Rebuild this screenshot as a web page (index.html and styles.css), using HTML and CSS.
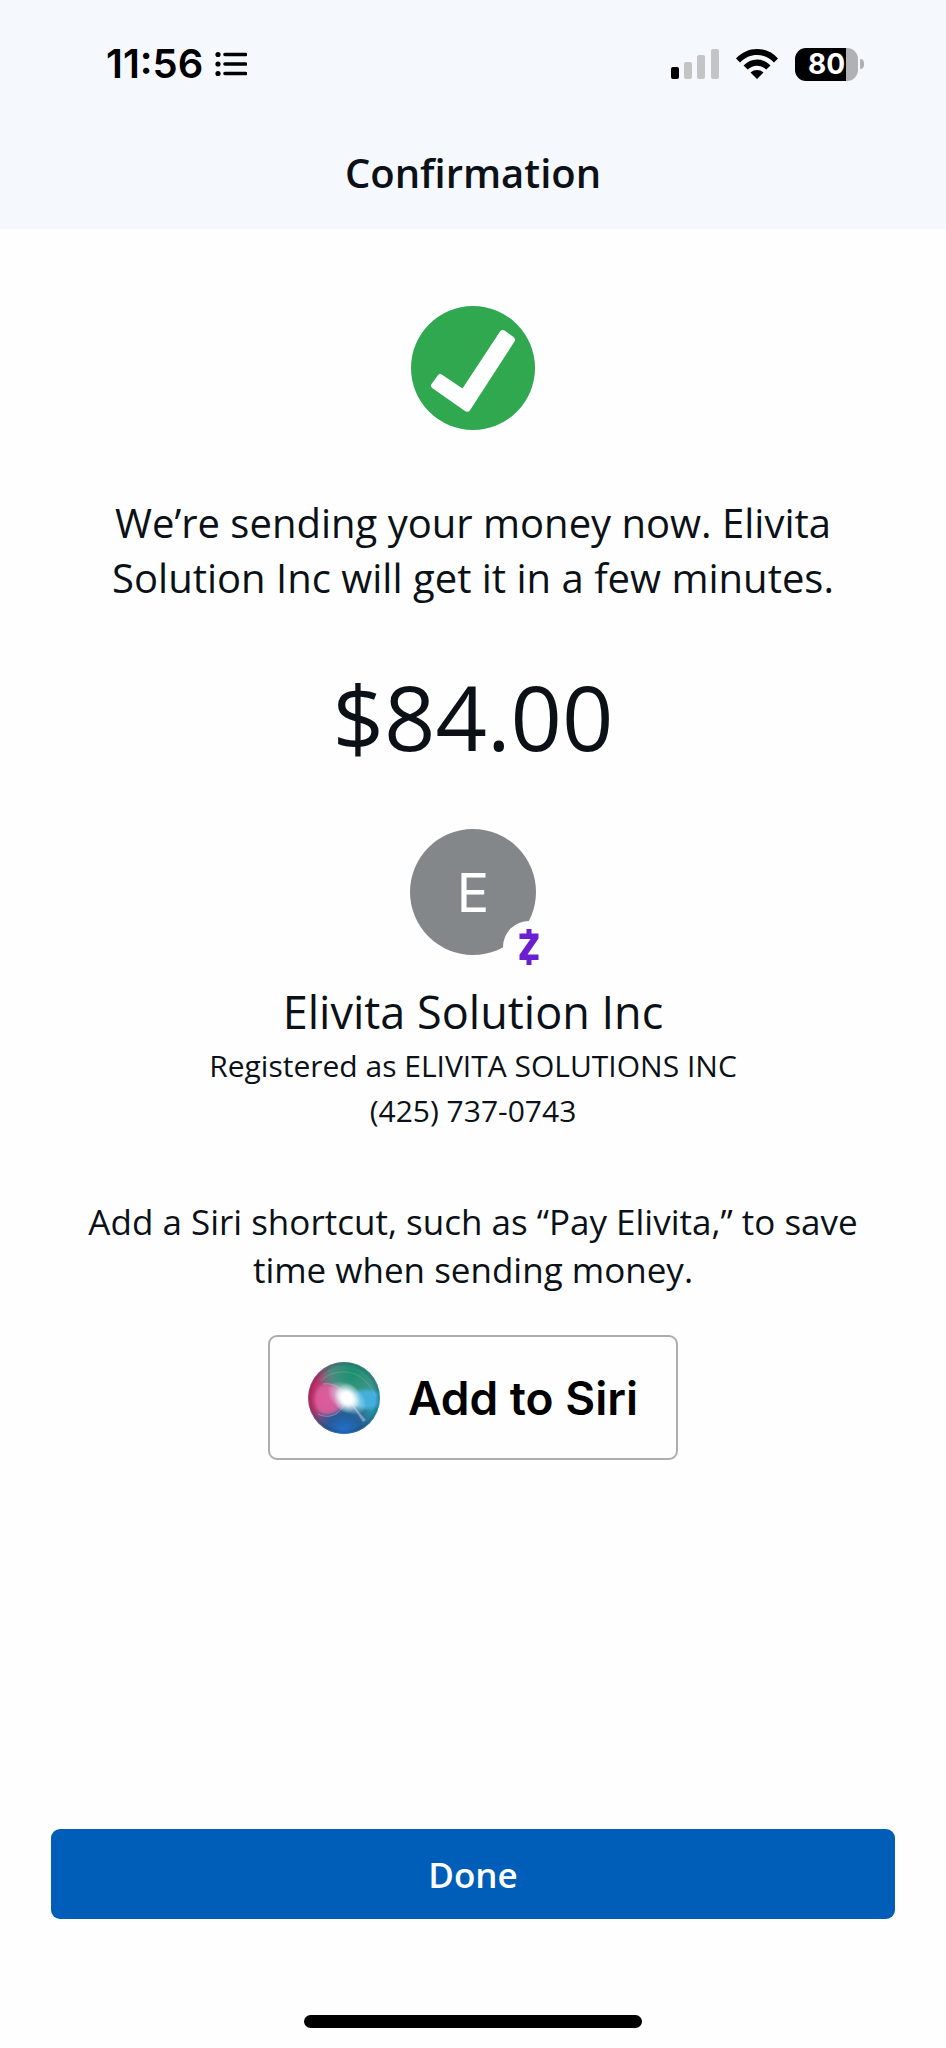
FILE: index.html
```html
<!DOCTYPE html>
<html lang="en">
<head>
<meta charset="utf-8">
<meta name="viewport" content="width=device-width, initial-scale=1">
<title>Confirmation</title>
<link rel="stylesheet" href="styles.css">
</head>
<body>
<div class="screen">
  <header class="top">
    <div class="status">
      <div class="status-left">
        <span class="clock">11:56</span>
        <svg class="list-icon" width="32" height="26" viewBox="0 0 32 26" aria-hidden="true">
          <g fill="#000"><circle cx="3" cy="3.500" r="2.600"/><circle cx="3" cy="13" r="2.600"/><circle cx="3" cy="22.500" r="2.600"/></g>
          <path d="M10 3.500H30.500M10 13H30.500M10 22.500H30.500" stroke="#000" stroke-width="3.600" stroke-linecap="round"/>
        </svg>
      </div>
      <div class="status-right">
        <svg width="48" height="30" viewBox="0 0 48 30" aria-hidden="true">
          <rect x="0" y="18" width="8" height="12" rx="2" fill="#000"/>
          <rect x="13" y="13" width="8" height="17" rx="2" fill="#c3c4c6"/>
          <rect x="26" y="6" width="8" height="24" rx="2" fill="#c3c4c6"/>
          <rect x="40" y="0" width="8" height="30" rx="2" fill="#c3c4c6"/>
        </svg>
        <svg width="44" height="32" viewBox="0 0 44 32" aria-hidden="true">
          <path d="M1 10.500C12.500-2.300 31.500-2.300 43 10.500L39 14.400C29.500 4.500 14.500 4.500 5 14.400Z"/>
          <path d="M8.500 17.500C16 9.500 28 9.500 35.500 17.500L31.300 21.600C26 16.500 18 16.500 12.700 21.600Z"/>
          <path d="M15.500 24.500C19.300 21.200 24.700 21.200 28.500 24.500L22 31Z"/>
        </svg>
        <div class="battery"><span class="battery-body">80</span><span class="battery-nub"></span></div>
      </div>
    </div>
    <h1 class="title">Confirmation</h1>
  </header>
  <main class="content">
    <svg class="check" width="124" height="124" viewBox="0 0 124 124" role="img" aria-label="Success">
      <circle cx="62" cy="62" r="62" fill="#2fa84f"/>
      <path d="M31.500 69Q28.500 67 26.800 69.500L20.500 78Q19 80.500 21.500 82.300L54 105Q57 107 59 104.200L103.500 35.500Q105 32.800 102.500 31L94 24.800Q91 23 89 25.500L51.500 82.500Z" fill="#fff"/>
    </svg>
    <p class="message">We’re sending your money now. Elivita Solution Inc will get it in a few minutes.</p>
    <p class="amount">$84.00</p>
    <div class="avatar">
      <span>E</span>
      <span class="badge">
        <svg width="20" height="36" viewBox="0 0 20 36" role="img" aria-label="Zelle">
          <path d="M7.500 0H12.500V4.500H19.500V9.500L8.500 25.500H19.500V31H12.500V36H7.500V31H.5V25.800L11.500 10H.5V4.500H7.500Z" fill="#6a1fd0"/>
        </svg>
      </span>
    </div>
    <h2 class="name">Elivita Solution Inc</h2>
    <p class="detail">Registered as ELIVITA SOLUTIONS INC</p>
    <p class="detail">(425) 737-0743</p>
    <p class="hint">Add a Siri shortcut, such as “Pay Elivita,” to save time when sending money.</p>
    <button class="siri" type="button">
      <svg width="72" height="72" viewBox="0 0 72 72" aria-hidden="true">
        <defs>
          <clipPath id="orb"><circle cx="36" cy="36" r="36"/></clipPath>
          <filter id="soft" x="-20%" y="-20%" width="140%" height="140%"><feGaussianBlur stdDeviation="1.500"/></filter>
          <linearGradient id="base" x1="0" y1=".4" x2="1" y2=".6"><stop offset="0" stop-color="#d3265f"/><stop offset=".25" stop-color="#a04676"/><stop offset=".55" stop-color="#4b7f90"/><stop offset="1" stop-color="#1f9aa8"/></linearGradient>
          <radialGradient id="green" cx=".62" cy=".15" r=".5"><stop offset="0" stop-color="#17906c"/><stop offset=".6" stop-color="#3c9880" stop-opacity=".8"/><stop offset="1" stop-color="#4b9b8b" stop-opacity="0"/></radialGradient>
          <radialGradient id="blue" cx=".5" cy=".98" r=".5"><stop offset="0" stop-color="#2273d4"/><stop offset=".5" stop-color="#205a9a" stop-opacity=".9"/><stop offset="1" stop-color="#265790" stop-opacity="0"/></radialGradient>
          <radialGradient id="pink" cx=".4" cy=".5" r=".6"><stop offset="0" stop-color="#ea5c9e"/><stop offset="1" stop-color="#d4609f"/></radialGradient>
          <radialGradient id="glow"><stop offset="0" stop-color="#fff"/><stop offset=".35" stop-color="#fff" stop-opacity=".9"/><stop offset=".65" stop-color="#e4f4fb" stop-opacity=".4"/><stop offset="1" stop-color="#dff" stop-opacity="0"/></radialGradient>
          <radialGradient id="rim"><stop offset=".86" stop-color="#163252" stop-opacity="0"/><stop offset=".96" stop-color="#163252" stop-opacity=".25"/><stop offset="1" stop-color="#69a4bd" stop-opacity=".4"/></radialGradient>
        </defs>
        <g clip-path="url(#orb)">
          <rect width="72" height="72" fill="url(#base)"/>
          <rect width="72" height="72" fill="url(#green)"/>
          <rect width="72" height="72" fill="url(#blue)"/>
          <g filter="url(#soft)">
            <path d="M12 24C24 19 35 26 39 37C34 50 20 56 11 50C5 43 5 30 12 24Z" fill="url(#pink)" opacity=".9"/>
            <path d="M38 37C48 27 60 25 71 31V43C61 51 50 47 38 37Z" fill="#45b4e8" opacity=".85"/>
          </g>
          <path d="M15 22C27 20 35 28 39 36C34 52 22 58 10 52" fill="none" stroke="#d9c4e6" stroke-opacity=".45"/>
          <path d="M13 19C22 8 46 6 57 19C64 25 64 29 68 34" fill="none" stroke="#a8d4c8" stroke-opacity=".25"/>
          <path d="M39 36L58 58L55 60Z" fill="#d8d2ee" opacity=".45"/>
          <g transform="rotate(35 39 36)">
            <ellipse cx="39" cy="36" rx="22" ry="14" fill="url(#glow)"/>
          </g>
          <ellipse cx="39" cy="36" rx="13" ry="15" fill="url(#glow)"/>
          <circle cx="36" cy="36" r="36" fill="url(#rim)"/>
        </g>
      </svg>
      <span>Add to Siri</span>
    </button>
  </main>
  <footer class="bottom">
    <button class="done" type="button">Done</button>
    <div class="home-bar"></div>
  </footer>
</div>
</body>
</html>
```
FILE: styles.css
```css
* {
  box-sizing: border-box;
}

body,
h1,
h2,
p {
  margin: 0;
}

body {
  background: #fefefe;
  color: #0b1116;
  font-family: "Open Sans", "Noto Sans", sans-serif;
}

.screen {
  display: flex;
  flex-direction: column;
  min-height: 100vh;
}

.top {
  padding: 40px 82px 28px 106px;
  background: #f5f8fd;
}

.status {
  display: flex;
  align-items: center;
  justify-content: space-between;
  height: 48px;
  margin-bottom: 57px;
  color: #000;
  font-family: Inter, sans-serif;
}

.status-left {
  display: flex;
  align-items: center;
  gap: 12px;
}

.clock {
  font-size: 40px;
  font-weight: 600;
  line-height: 48px;
}

.status-right {
  display: flex;
  align-items: center;
  gap: 16px;
}

.battery {
  display: flex;
  align-items: center;
  gap: 2px;
}

.battery-body {
  width: 63px;
  padding: 0 6px;
  border-radius: 11px;
  background: linear-gradient(to right, #000 51px, #b0b1b3 51px);
  color: #fff;
  font-size: 28px;
  font-weight: 700;
  line-height: 33px;
  text-align: center;
}

.battery-nub {
  width: 4px;
  height: 10px;
  border-radius: 0 4px 4px 0;
  background: #b0b1b3;
}

.title {
  margin: 0 -24px 0 -48px;
  font-size: 40px;
  font-weight: 600;
  line-height: 56px;
  text-align: center;
}

.content {
  display: flex;
  flex: 1;
  flex-direction: column;
  align-items: center;
  padding: 77px 70px 40px;
  text-align: center;
}

.message {
  max-width: 760px;
  margin-top: 65px;
  font-size: 40px;
  line-height: 55px;
}

.amount {
  margin-top: 56px;
  font-size: 90px;
  line-height: 110px;
}

.avatar {
  position: relative;
  display: grid;
  place-items: center;
  width: 126px;
  height: 126px;
  margin-top: 58px;
  border-radius: 50%;
  background: #838789;
  color: #fff;
  font-family: Inter, sans-serif;
  font-size: 54px;
}

.badge {
  position: absolute;
  right: -19px;
  bottom: -18px;
  display: grid;
  place-items: center;
  width: 52px;
  height: 52px;
  border-radius: 50%;
  background: #fefefe;
}

.name {
  margin: 29px 0 3px;
  font-size: 45px;
  font-weight: 400;
  line-height: 56px;
}

.detail {
  font-size: 30px;
  line-height: 45px;
}

.hint {
  margin-top: 65px;
  font-size: 35px;
  line-height: 48px;
}

.siri {
  display: flex;
  align-items: center;
  gap: 28px;
  height: 125px;
  margin-top: 41px;
  padding: 0 38px;
  border: 2px solid #adadad;
  border-radius: 9px;
  background: #fefefe;
  color: #000;
  font-family: Inter, sans-serif;
  font-size: 46px;
  font-weight: 600;
}

.bottom {
  display: flex;
  flex-direction: column;
  align-items: center;
  gap: 96px;
  padding: 0 51px 20px;
}

.done {
  width: 100%;
  height: 90px;
  border: 0;
  border-radius: 9px;
  background: #005eb9;
  color: #fff;
  font-family: inherit;
  font-size: 35px;
  font-weight: 600;
}

.home-bar {
  width: 40%;
  height: 13px;
  border-radius: 7px;
  background: #000;
}
```
